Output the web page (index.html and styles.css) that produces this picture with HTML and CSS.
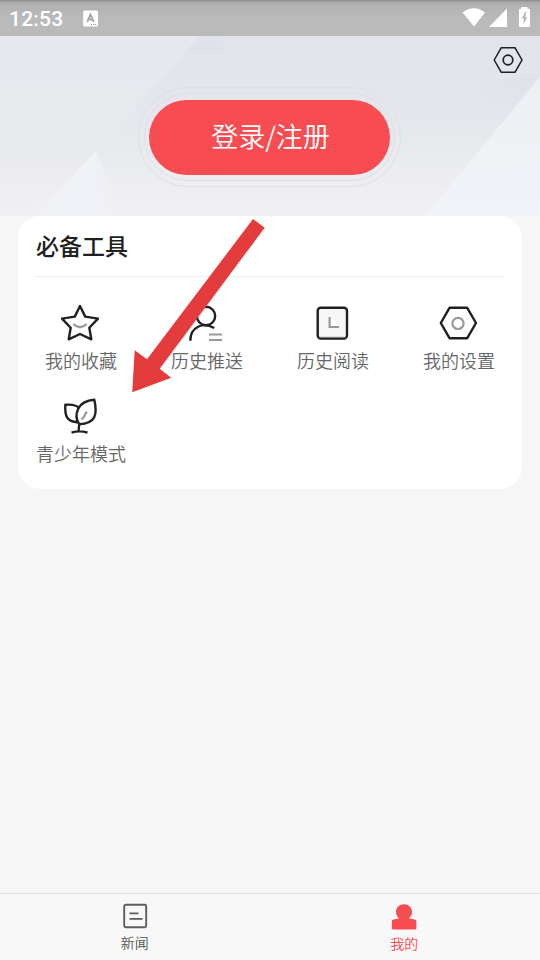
FILE: index.html
```html
<!DOCTYPE html>
<html lang="zh-CN">
<head>
<meta charset="utf-8">
<title>我的</title>
<link rel="stylesheet" href="styles.css">
</head>
<body>
<div class="app">
  <header class="status">
    <div class="status-left">
      <span class="clock">12:53</span>
      <svg class="app-mark" width="16" height="17" viewBox="0 0 16 17"><rect x=".2" y=".5" width="14.800" height="16" rx="1.500" fill="#fff"/><path d="M4.200 11.800 7.500 4.500 10.800 11.800M5.500 9.500h4" fill="none" stroke="#a8a8a8" stroke-width="1.900"/><path d="M8 14.500h6" stroke="#999" stroke-dasharray="1 1"/></svg>
    </div>
    <svg class="status-icons" width="70" height="22" viewBox="0 0 70 22"><g fill="#fff"><path d="M.5 5.500Q12-3 23 5.500L12 19.500Z"/><path d="M45 1.500V20H27Z"/><path d="M59.500 0h6v1.700h1.500q1 0 1 1V19q0 1-1 1h-9q-1 0-1-1V2.700q0-1 1-1h1.500z"/></g><path d="M63.500 4.800 59.800 11.500h2.200l-.7 6 4-7.200h-2.200l1.500-5.500z" fill="#b3b3b3"/></svg>
  </header>

  <section class="hero">
    <svg class="hero-bg" width="540" height="180" viewBox="0 0 540 180">
      <defs>
        <linearGradient id="base" x2="0" y2="1"><stop offset="0" stop-color="#e2e4ea"/><stop offset=".45" stop-color="#e5e7ec"/><stop offset="1" stop-color="#f1f1f3"/></linearGradient>
        <linearGradient id="left" gradientUnits="userSpaceOnUse" x1="0" y1="0" x2="0" y2="180"><stop offset="0" stop-color="#e7e8ed"/><stop offset=".65" stop-color="#e9eaee"/><stop offset="1" stop-color="#f1f1f3"/></linearGradient>
        <linearGradient id="fade" x1="1" x2="0" y2="1"><stop offset="0" stop-color="#dee1e9"/><stop offset="1" stop-color="#e5e7ec" stop-opacity="0"/></linearGradient>
        <linearGradient id="pale" x2="0" y2="1"><stop offset="0" stop-color="#eeeff3"/><stop offset="1" stop-color="#f2f3f8"/></linearGradient>
        <linearGradient id="shard" x2="1"><stop offset="0" stop-color="#f1f2f6"/><stop offset=".6" stop-color="#f1f2f7"/><stop offset="1" stop-color="#f0f1f4" stop-opacity="0"/></linearGradient>
      </defs>
      <rect width="540" height="180" fill="url(#base)"/>
      <path d="M0 0H200L118 92 90 180H0Z" fill="url(#left)"/>
      <path d="M200 0h23v18h-39z" fill="#dee1ea" opacity=".6"/>
      <path d="M0 145Q15 137 24 123L20 158 36 180H0Z" fill="#eeeff2" opacity=".35"/>
      <path d="M36 180 96 115 125 180Z" fill="url(#shard)"/>
      <path d="M540 38 482 45Q468 62 470 80L500 91Z" fill="url(#fade)"/>
      <path d="M540 41V180H425Z" fill="url(#pale)"/>
    </svg>
    <div class="ring-outer"><div class="ring-inner"><div class="login">登录/注册</div></div></div>
    <svg class="hero-gear" width="30" height="28" viewBox="0 0 30 28"><g fill="none" stroke="#202124" stroke-width="1.500"><path d="M1.200 14 8.200 1.800H22L29 14 22 26.200H8.200Z"/><circle cx="15" cy="14" r="4.800" stroke-width="1.700"/></g></svg>
  </section>

  <main class="card">
    <h1 class="card-title">必备工具</h1>
    <div class="tools">
      <div class="tool">
        <svg class="icon" viewBox="0 0 42 42"><path d="M20 4 25.200 14.600 38 16.600 29.300 25.800 31.300 37.300 20 32 8.700 37.300 10.700 25.800 2 16.600 14.800 14.600Z"/><path class="soft" d="M13.300 22Q20 28.500 26.700 22"/></svg>
        <span>我的收藏</span>
      </div>
      <div class="tool">
        <svg class="icon" viewBox="0 0 42 42"><circle cx="20" cy="14" r="9.200"/><path d="M4.300 38.800C4.300 25 17 19.500 28.200 26"/><path class="soft" d="M23 32.500h13M23 38h13"/></svg>
        <span>历史推送</span>
      </div>
      <div class="tool">
        <svg class="icon" viewBox="0 0 42 42"><rect x="5.700" y="5.800" width="29.300" height="30.700" rx="3" fill="#f7f7f7"/><path d="M7 35.200h27" stroke="#999" stroke-width=".8"/><path d="M19 15.500 27 24H19Z" fill="#fff" stroke="none"/><path class="soft clock-hand" d="M17.600 15V25H27"/></svg>
        <span>历史阅读</span>
      </div>
      <div class="tool">
        <svg class="icon" viewBox="0 0 42 42"><path d="M2.800 21 11.500 5.800H29.200L38 21 29.200 36.200H11.500Z"/><circle class="soft" cx="20" cy="21.400" r="5.600"/></svg>
        <span>我的设置</span>
      </div>
      <div class="tool">
        <svg class="icon" viewBox="0 0 42 42"><path d="M19 12.800C15.500 9.500 11 9.200 5.300 9.800 4.800 20.500 6.500 27 17.500 27.200"/><path d="M34.300 4.800C26.500 5.400 21 8.500 18.300 13.500 15.800 18.500 16 24.500 19.200 29.300 26 29 31.500 27.500 34.200 22.200 36.800 17 35.500 10 34.300 4.800ZM19.200 29.300 18.500 36.500M11.500 37.600Q19.500 35.200 27.500 37.600"/><path class="soft" d="M27 16.700 25.500 18.500 24 21.800 21.500 24.500"/></svg>
        <span>青少年模式</span>
      </div>
    </div>
  </main>

  <nav class="tabs">
    <div class="tab">
      <svg width="26" height="26" viewBox="0 0 26 26"><rect x="2.200" y="1.800" width="22" height="22.500" rx="1.500" fill="none" stroke="#5e5e5e" stroke-width="1.900"/><path d="M7.500 10.400h9M7.500 15.800h13" stroke="#5e5e5e" stroke-width="1.700"/></svg>
      <span>新闻</span>
    </div>
    <div class="tab active">
      <svg width="26" height="26" viewBox="0 0 26 26"><path d="M13 .3C17.500.3 21 3.500 21 7.700 21 10.500 19.800 12.700 18 14.500L23.800 15.500Q25.400 15.900 25.400 17.500V24Q25.400 25.500 23.900 25.500H2.300Q.8 25.500.8 24V17.500Q.8 15.900 2.400 15.500L8 14.500C6.200 12.700 5 10.500 5 7.700 5 3.500 8.500.3 13 .3Z" fill="#f64c52"/></svg>
      <span>我的</span>
    </div>
  </nav>

  <svg class="pointer" width="140" height="176" viewBox="132 218 140 176"><path d="M253 219 264.700 227.700 159.700 368.700 171.200 377.800 132.200 392.300 134.700 350.300 147 359.300Z" fill="#e43c3d"/></svg>
</div>
</body>
</html>
```
FILE: styles.css
```css
* { box-sizing: border-box; }
body {
  margin: 0;
  font-family: "Noto Sans CJK SC", sans-serif;
  background: #f6f6f6;
}
svg { display: block; }
.app {
  position: relative;
  display: flex;
  flex-direction: column;
  width: 540px;
  height: 960px;
  overflow: hidden;
}
.status {
  flex: 0 0 36px;
  height: 36px;
  display: flex;
  justify-content: space-between;
  padding: 0 9px;
  background: linear-gradient(#858585 0, #aaa 2px, #b1b1b1 5px, #bababa 18px, #bababa 100%);
}
.status-left { display: flex; align-items: center; gap: 20px; }
.clock {
  font: 500 21px/34px Roboto, sans-serif;
  letter-spacing: .2px;
  color: #fff;
  padding-top: 2px;
}
.status-icons { margin: 7px -1px 0 0; }
.hero {
  position: relative;
  flex: 0 0 180px;
  display: flex;
  justify-content: center;
  padding: 51px 1px 0 0;
}
.hero-bg { position: absolute; left: 0; top: 0; }
.hero-gear { position: absolute; right: 17px; top: 10px; }
.ring-outer {
  position: relative;
  width: 263px;
  height: 100px;
  padding: 5px;
  border: 1px solid #dfe0e4;
  border-radius: 50px;
}
.ring-inner {
  height: 88px;
  padding: 5.500px 4px;
  border: 1px solid #dfe0e4;
  border-radius: 44px;
}
.login {
  height: 75px;
  padding-left: 2px;
  border-radius: 38px;
  background: #f64c52;
  color: #fff;
  font-size: 27px;
  font-weight: 350;
  line-height: 71px;
  text-align: center;
}
.card {
  flex: 0 0 273px;
  margin: 0 18px;
  border-radius: 22px;
  background: #fff;
}
.card-title {
  margin: 0 18px;
  height: 61px;
  border-bottom: 1px solid #ededed;
  font-size: 23px;
  font-weight: 500;
  line-height: 59px;
  color: #202020;
}
.tools {
  display: grid;
  grid-template-columns: repeat(4, 126px);
  row-gap: 17px;
  padding-top: 25px;
}
.tool {
  display: flex;
  flex-direction: column;
  align-items: center;
  font-size: 18px;
  font-weight: 350;
  line-height: 34px;
  color: #666;
}
.tool span { height: 34px; margin-top: -1px; margin-bottom: 1px; }
.icon {
  width: 42px;
  height: 42px;
  fill: none;
  stroke: #202020;
  stroke-width: 2.400;
  stroke-linecap: butt;
  stroke-linejoin: round;
}
.icon .soft { stroke: #999; stroke-width: 2.200; }
.icon .clock-hand { stroke-linejoin: miter; }
.tabs {
  display: flex;
  height: 67px;
  margin-top: auto;
  border-top: 1px solid #e0e0e0;
  background: #f8f8f8;
}
.tab {
  flex: 1;
  display: flex;
  flex-direction: column;
  align-items: center;
  padding-top: 9px;
  font-size: 14px;
  font-weight: 350;
  line-height: 27px;
  color: #555;
}
.tab.active { color: #f64c52; padding: 10px 1px 0 0; }
.pointer { position: absolute; left: 132px; top: 218px; }
```
